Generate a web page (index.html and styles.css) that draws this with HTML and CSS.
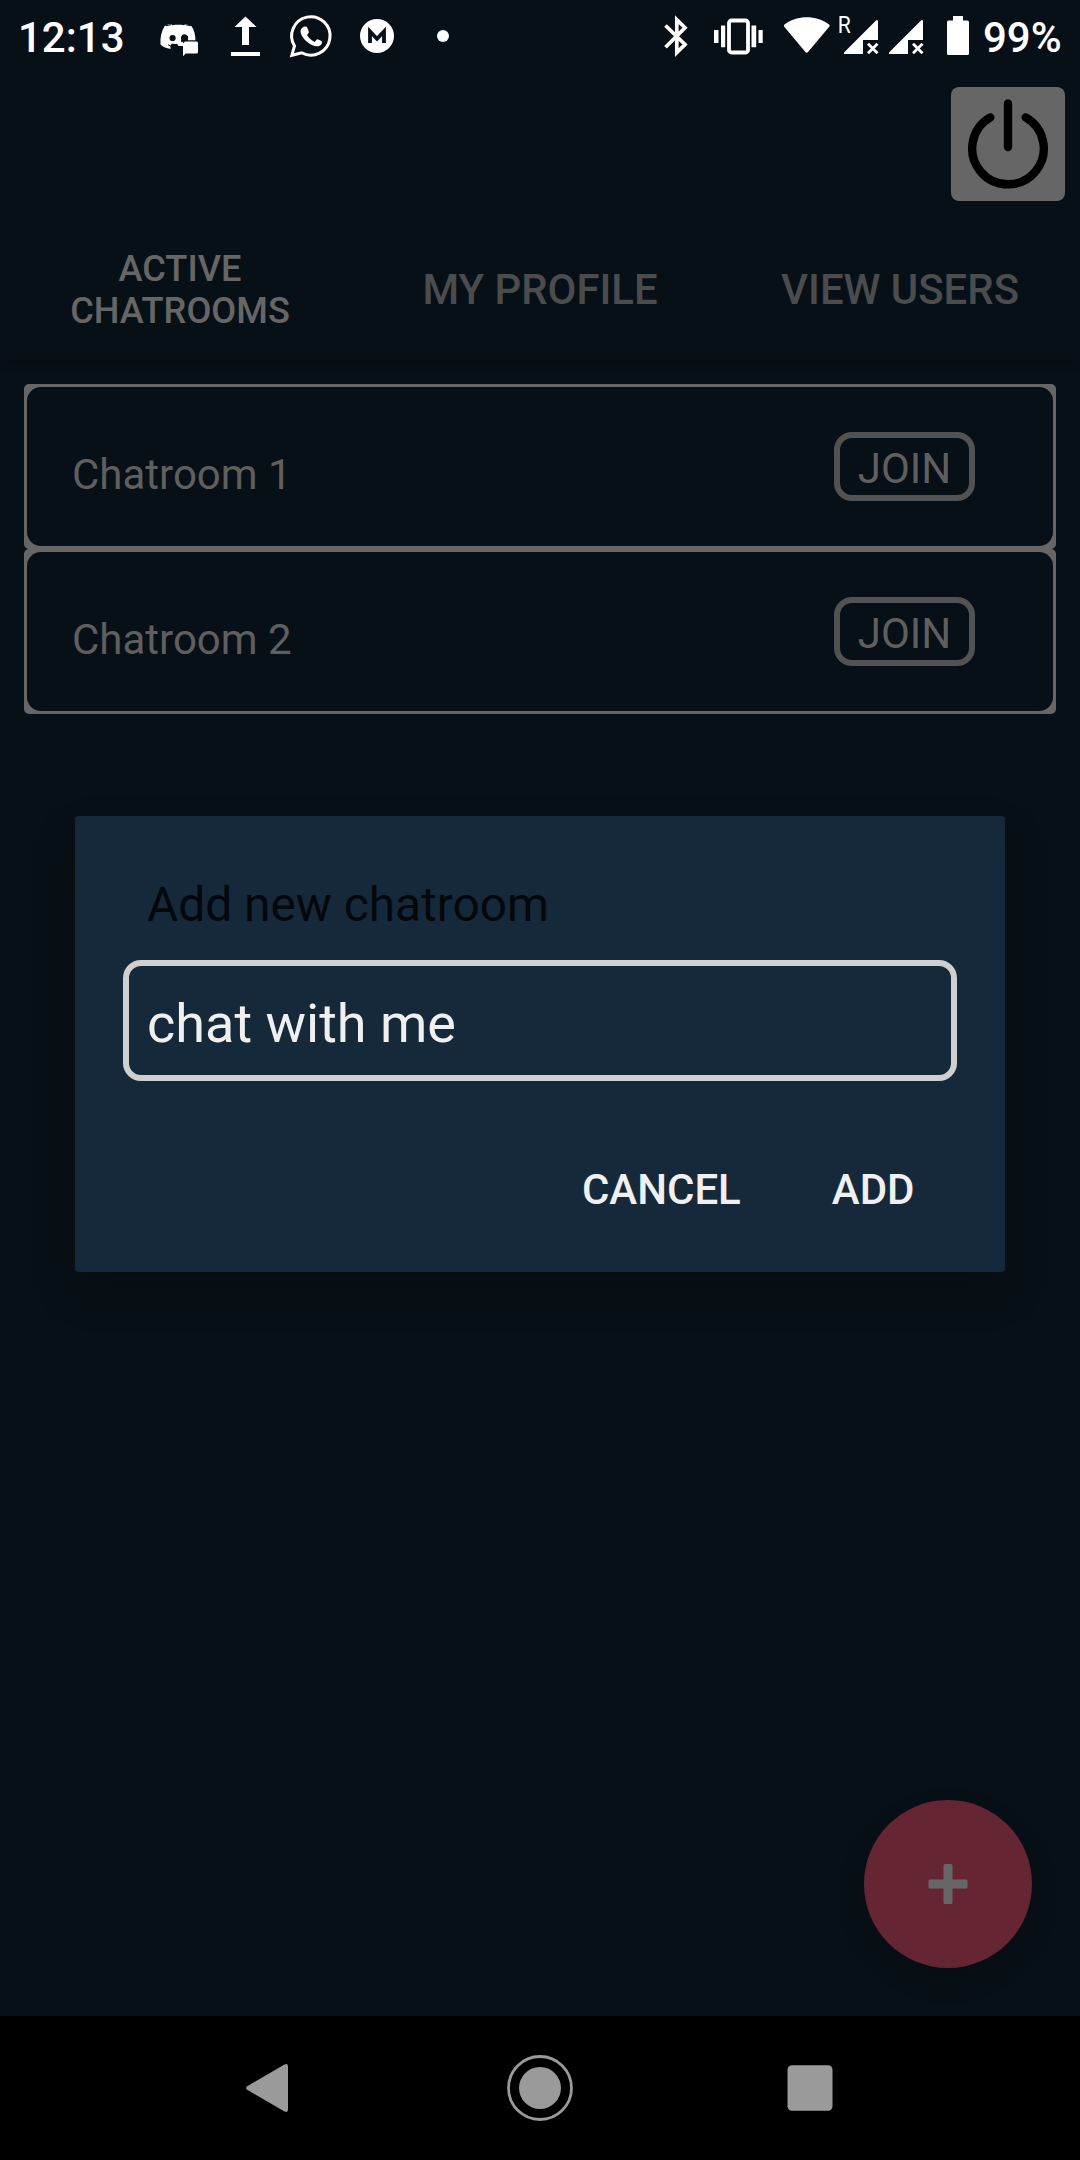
FILE: index.html
```html
<!DOCTYPE html>
<html lang="en">
<head>
<meta charset="utf-8">
<title>Chatrooms</title>
<link rel="stylesheet" href="styles.css">
</head>
<body>
<div class="screen">
  <header class="status">
    <span class="clock">12:13</span>
    <div class="notifications">
      <svg width="48" height="48" viewBox="155 12 48 48"><path fill="#fff" d="M164.500 26.300c2-1.200 4-2 6.500-2.300l1.200 1.200c4-.6 8-.6 12 0l1.200-1.200c2.300.4 4.300 1.200 6.200 2.300 2.600 4 3.700 8.300 3.900 14H183v5.800l-4.500-.2-1.500-2.200c-2 .3-3.500.3-5.200-.1l-1.600 2.800.7 2.300c-3.500-.2-7-1.200-10.400-4.300-.4-7.400 1-13 4-18.100z"/><circle cx="172.600" cy="38" r="3.100" fill="#081017"/><path d="M181 42v-5a3.500 3.500 0 0 1 7 2v2z" fill="#081017"/><path d="M168 44.800l5 2.200M166 25.800l5-1.200M190.500 25.800l-5-1.200" stroke="#081017" stroke-width="1" fill="none"/><path fill="#fff" d="M185 41.500h11.500a1.500 1.500 0 0 1 1.500 1.500v9a1.500 1.500 0 0 1-1.500 1.500H185.700L183 56.200V43.500z"/></svg>
      <svg width="48" height="48" viewBox="221 12 48 48"><path fill="#fff" d="M245.500 16.500 256.500 27H249v18h-7V27h-7.500zM231 52h29v4h-29z"/></svg>
      <svg width="48" height="48" viewBox="287 12 48 48"><path d="M291.800 55.300l2.700-9.300a19.200 19.200 0 1 1 7.200 6.800z" fill="none" stroke="#fff" stroke-width="3"/><path fill="#fff" d="M302.600 27.600c1-1.200 3.200-1.400 4.200-.6.700 1 1.700 3.400 2.100 5 .1 1-1.400 2.200-1.900 3.100 2 3.300 4.300 5.300 7.600 6.800 1-.8 2.100-2.600 3-2.700 1.500.5 3.600 1.500 4.400 2.300.3 2.200-1 4-3.600 4.700-3 .7-8.300-1.600-12.300-5.300-3.600-3.400-5.900-7.300-5.500-10.200.2-1.300 1-2.300 2-3.100z"/></svg>
      <svg width="48" height="48" viewBox="353 12 48 48"><circle cx="377" cy="36" r="17" fill="#fff"/><path d="M370 43V31.500l7 7.200 7-7.200V43" fill="none" stroke="#081017" stroke-width="3.800"/></svg>
      <svg width="48" height="48" viewBox="419 12 48 48"><circle cx="443" cy="36" r="6" fill="#fff"/></svg>
    </div>
    <div class="system">
      <svg width="30" height="48" viewBox="661 12 30 48"><path d="M665.500 25.500l19.500 19-8.200 8V19.700l8.200 8-19.500 19.500" fill="none" stroke="#fff" stroke-width="3.700"/></svg>
      <svg width="52" height="48" viewBox="712 12 52 48"><rect x="729" y="20.500" width="19" height="32" rx="2.500" fill="none" stroke="#fff" stroke-width="3.800"/><path fill="#fff" d="M721 25.500h4.200v21.700H721zM714 30h4.500v13H714zM751.500 25.500h4.700v21.700h-4.700zM758.500 30h4.200v13h-4.200z"/></svg>
      <svg width="46" height="48" viewBox="784 12 46 48"><path fill="#fff" d="M784.300 26.800c-.8-1-.6-1.600.2-2.200 13-9.700 31.500-9.700 44.500 0 .8.600.9 1.200.2 2.200L808 52q-1.300 1.500-2.600 0z"/></svg>
      <svg width="90" height="48" viewBox="836 12 90 48"><text class="roam" x="837.800" y="32.500" textLength="13" lengthAdjust="spacingAndGlyphs">R</text><path fill="#fff" d="M844 54q-.500-1 .5-2L876 20.500q1.500-1 2 .5v19h-15v14z"/><path d="M868 43.700l9.500 9.500m0-9.500l-9.500 9.500" stroke="#fff" stroke-width="2.800"/><path fill="#fff" d="M889 54q-.500-1 .5-2L921 20.500q1.500-1 2 .5v19h-15v14z"/><path d="M913 43.700l9.500 9.500m0-9.500l-9.500 9.500" stroke="#fff" stroke-width="2.800"/></svg>
      <svg width="24" height="48" viewBox="946 12 24 48"><path fill="#fff" d="M953 16h10v4.500h4.500q1.500 0 1.500 1.500v31.500q0 1.500-1.500 1.500h-19q-1.500 0-1.500-1.500V22q0-1.500 1.500-1.500h4.500z"/></svg>
    </div>
    <span class="charge">99%</span>
  </header>

  <div class="toolbar">
    <button class="power" aria-label="Log out"><svg width="114" height="114" viewBox="951 87 114 114"><path d="M990.300 117.400a35.800 35.800 0 1 0 35.400 0M1008 103.500v43.500" fill="none" stroke="#000" stroke-width="8.400" stroke-linecap="round"/></svg></button>
  </div>

  <nav class="tabs">
    <span class="tab tab-active">ACTIVE<br>CHATROOMS</span>
    <span class="tab">MY PROFILE</span>
    <span class="tab">VIEW USERS</span>
  </nav>

  <main class="rooms">
    <section class="room"><div class="room-inner"><span class="room-name">Chatroom 1</span><button class="join">JOIN</button></div></section>
    <section class="room"><div class="room-inner"><span class="room-name">Chatroom 2</span><button class="join">JOIN</button></div></section>
  </main>

  <button class="fab" aria-label="Add chatroom"><svg width="40" height="40" viewBox="0 0 40 40"><path fill="#666" d="M17 0h6q1.500 0 1.500 1.500v14h13.500q1.500 0 1.500 1.500v6q0 1.500-1.500 1.500H24.500v14q0 1.500-1.500 1.500h-6q-1.500 0-1.500-1.500V24.500H2Q.5 24.500.5 23v-6q0-1.500 1.500-1.500h13.500v-14Q15.500 0 17 0z"/></svg></button>

  <div class="dialog" role="dialog">
    <h1 class="dialog-title">Add new chatroom</h1>
    <div class="field">chat with me</div>
    <div class="actions"><span>CANCEL</span><span>ADD</span></div>
  </div>

  <footer class="navbar">
    <svg width="48" height="54" viewBox="243 2061 48 54"><path fill="#9a9a9a" d="M247.200 2086.200 284.500 2064.500Q288 2063 288 2066.500V2109.500Q288 2113 284.500 2111.500L247.200 2089.800Q245 2088 247.200 2086.200z"/></svg>
    <svg class="home" width="66" height="66" viewBox="0 0 66 66"><circle cx="33" cy="33" r="31.500" fill="none" stroke="#9a9a9a" stroke-width="2.800"/><circle cx="33" cy="33" r="21" fill="#9a9a9a"/></svg>
    <svg width="46" height="46" viewBox="0 0 46 46"><rect x=".5" y=".3" width="45" height="45.500" rx="4.500" fill="#9a9a9a"/></svg>
  </footer>
</div>
</body>
</html>
```
FILE: styles.css
```css
* { box-sizing: border-box; }

body {
  margin: 0;
  background: #081017;
  font-family: Roboto, "Liberation Sans", sans-serif;
  font-size: 42px;
  line-height: 49px;
}

button {
  font: inherit;
  padding: 0;
  border: 0;
}

svg { display: block; flex: none; }

.screen {
  position: relative;
  width: 1080px;
  height: 2160px;
  display: flex;
  flex-direction: column;
  background: #081017;
  overflow: hidden;
}

.status {
  display: flex;
  height: 72px;
  padding: 12px 17px 0 18px;
  color: #fff;
  font-weight: 500;
}

.clock, .charge { padding-top: 1px; }
.clock { width: 137px; }
.notifications { display: flex; gap: 18px; }
.system { display: flex; margin-left: auto; }
.system svg:nth-child(2) { margin-left: 21px; }
.system svg:nth-child(3) { margin-left: 20px; }
.system svg:nth-child(4) { margin-left: 6px; }
.system svg:nth-child(5) { margin-left: 20px; }
.charge { width: 80px; margin-left: 13px; }
.roam { font-size: 23.5px; font-weight: 400; fill: #fff; }

.toolbar {
  display: flex;
  justify-content: flex-end;
  height: 144px;
  padding: 15px 15px 0 0;
}

.power {
  width: 114px;
  height: 114px;
  border-radius: 8px;
  background: #666;
}

.tabs {
  display: grid;
  grid-template-columns: repeat(3, 1fr);
  align-items: center;
  height: 144px;
  padding-top: 3px;
  text-align: center;
  font-size: 41.9px;
  font-weight: 500;
  color: #4a4c4e;
  box-shadow: 0 6px 8px -5px #040a10;
}

.tab-active {
  font-size: 36.2px;
  line-height: 42px;
  color: #666;
}

.rooms { padding: 24px 24px 0; }

.room {
  height: 165px;
  padding: 3px;
  border-radius: 5px;
  background: #666;
}

.room-inner {
  display: flex;
  justify-content: space-between;
  align-items: flex-start;
  height: 159px;
  padding: 45px 78px 0 45px;
  border-radius: 14px;
  background: #081017;
}

.room-name { padding-top: 18px; color: #5f5f5f; }

.join {
  width: 141px;
  height: 69px;
  padding-top: 4px;
  border: 6px solid #525252;
  border-radius: 18px;
  background: none;
  color: #5f5f5f;
}

.fab {
  position: absolute;
  right: 48px;
  bottom: 192px;
  display: flex;
  align-items: center;
  justify-content: center;
  width: 168px;
  height: 168px;
  border-radius: 50%;
  background: #662533;
  box-shadow: 0 12px 24px rgba(0, 0, 0, .22);
}

.dialog {
  position: absolute;
  left: 75px;
  top: 816px;
  width: 930px;
  height: 456px;
  padding: 61px 48px 0;
  border-radius: 4px;
  background: #15293a;
  box-shadow: 0 20px 40px rgba(0, 0, 0, .22);
}

.dialog-title {
  margin: 0 0 0 24px;
  height: 83px;
  font-size: 47.85px;
  font-weight: 400;
  line-height: 57px;
  color: #04080c;
}

.field {
  height: 121px;
  padding: 26px 18px 0;
  border: 6px solid #d0d0d0;
  border-radius: 18px;
  font-size: 54px;
  line-height: 63px;
  color: #f0f0f0;
}

.actions {
  display: flex;
  justify-content: flex-end;
  gap: 91px;
  padding: 84px 42.5px 0 0;
  font-weight: 500;
  color: #f0f0f0;
}

.navbar {
  display: flex;
  align-items: center;
  justify-content: space-between;
  height: 144px;
  margin-top: auto;
  padding: 0 247px 0 243px;
  background: #000;
}

.home { margin-left: 2px; }
```
